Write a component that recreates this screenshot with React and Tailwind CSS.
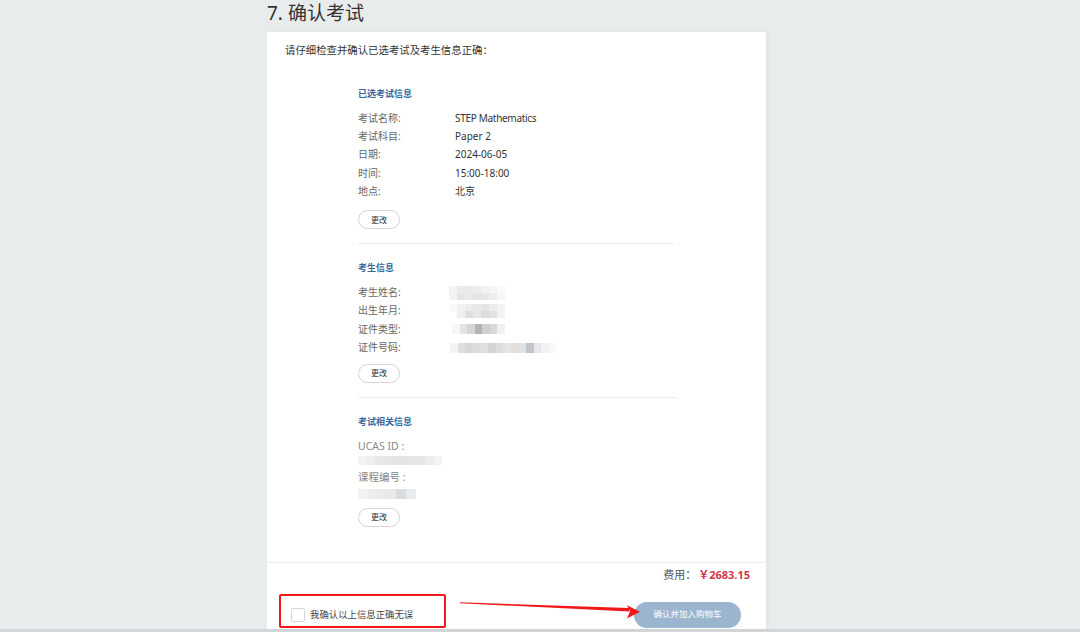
import React from "react";

const FONT = { fontFamily: '"Noto Sans", "Noto Sans CJK SC", sans-serif' };

function Pixels({ rows, cell }) {
  return (
    <div className="flex flex-col">
      {rows.map((r, i) => (
        <div key={i} className="flex">
          {r.map((c, j) => (
            <div key={j} style={{ backgroundColor: c, width: cell[0], height: cell[1] }} />
          ))}
        </div>
      ))}
    </div>
  );
}

function Row({ label, children }) {
  return (
    <div className="flex h-[18.3px] items-center text-[10px]">
      <div className="w-[97px] text-[#666]">{label}</div>
      <div className="text-[#333]">{children}</div>
    </div>
  );
}

function EditBtn({ className = "" }) {
  return (
    <button className={"flex h-[19px] w-[42px] items-center justify-center rounded-full border border-[#d4d4d4] bg-white text-[8px] text-[#333] " + className}>
      更改
    </button>
  );
}

function Heading({ children, className = "" }) {
  return (
    <div className={"h-[14px] text-[9px] font-bold leading-[14px] text-[#3b6699] " + className}>{children}</div>
  );
}

export default function App() {
  return (
    <div className="relative h-[632px] w-[1080px] overflow-hidden bg-[#e9eced]" style={FONT}>
      <div className="flex h-[629px] flex-col pl-[267px]">
        <div className="h-[32px] text-[19px] leading-[27px] text-[#333]">7. 确认考试</div>
        <div className="flex w-[499px] flex-1 flex-col bg-white shadow-[2px_0_4px_rgba(0,0,0,0.04)]">
          <div className="pl-[18px] pt-[11px] text-[10.4px] leading-[14px] text-[#333]">
            请仔细检查并确认已选考试及考生信息正确：
          </div>

          <div className="ml-[91px] w-[316px]">
            <Heading className="mt-[30px]">已选考试信息</Heading>
            <div className="mt-[8px]">
              <Row label="考试名称:"><span className="tracking-[-0.3px]">STEP Mathematics</span></Row>
              <Row label="考试科目:">Paper 2</Row>
              <Row label="日期:">2024-06-05</Row>
              <Row label="时间:">15:00-18:00</Row>
              <Row label="地点:">北京</Row>
            </div>
            <EditBtn className="mt-[10px]" />
            <div className="mt-[14px] border-t border-[#eeeeee]" />

            <Heading className="mt-[17px]">考生信息</Heading>
            <div className="mt-[8px]">
              <Row label="考生姓名:">
                <div className="-ml-[6px]">
                  <Pixels
                    cell={[8, 7]}
                    rows={[
                      ["#f4f4f4", "#ececec", "#e9e9e9", "#ededed", "#f2f2f2", "#f6f6f6", "#fbfbfb"],
                      ["#f3f3f3", "#e6e6e6", "#ebebeb", "#e4e4e4", "#e8e8e8", "#eeeeee", "#f7f7f7"],
                    ]}
                  />
                </div>
              </Row>
              <Row label="出生年月:">
                <div className="-ml-[6px]">
                  <Pixels
                    cell={[8, 7]}
                    rows={[
                      ["#fafafa", "#f2f2f2", "#ececec", "#e7e7e7", "#e4e4e4", "#ebebeb", "#f4f4f4"],
                      ["#ffffff", "#f0f0f0", "#dedede", "#e6e6e6", "#dcdcdc", "#e2e2e2", "#f2f2f2"],
                    ]}
                  />
                </div>
              </Row>
              <Row label="证件类型:">
                <div className="-ml-[3px]">
                  <Pixels
                    cell={[7.5, 10]}
                    rows={[["#f6f6f6", "#e4e4e4", "#d6d6d6", "#b3b3b3", "#cfcfcf", "#d9d9d9", "#f0f0f0"]]}
                  />
                </div>
              </Row>
              <Row label="证件号码:">
                <div className="-ml-[5px]">
                  <Pixels
                    cell={[7.6, 10]}
                    rows={[
                      ["#f4f4f4", "#dedede", "#d8d8d8", "#dcdcdc", "#e0e0e0", "#d4d4d4", "#dcdee0", "#e2e4e6", "#e3e0dc", "#dfe2e6", "#c6c4c8", "#e8e8ea", "#f2f2f4", "#fafafa"],
                    ]}
                  />
                </div>
              </Row>
            </div>
            <EditBtn className="mt-[7px]" />
            <div className="mt-[14px] w-[320px] border-t border-[#eeeeee]" />

            <Heading className="mt-[17px]">考试相关信息</Heading>
            <div className="mt-[9px] flex h-[18px] items-center text-[10.5px] text-[#888]">UCAS ID :</div>
            <div>
              <Pixels
                cell={[8.4, 9]}
                rows={[["#f3f3f3", "#eeeeee", "#e8e8e8", "#e6e6e6", "#e4e4e4", "#e4e4e4", "#e6e6e6", "#e6e6e6", "#ececec", "#f3f3f3"]]}
              />
            </div>
            <div className="mt-[4px] flex h-[18px] items-center text-[10.5px] text-[#888]">课程编号 :</div>
            <div className="mt-[2px]">
              <Pixels
                cell={[9.6, 10]}
                rows={[["#f2f2f2", "#ededed", "#eaeaea", "#e9e9e9", "#dcdcdc", "#e8ecef"]]}
              />
            </div>
            <EditBtn className="mt-[9px]" />
          </div>

          <div className="mt-[35px] border-t border-[#eeeeee]" />
          <div className="flex h-[26px] items-center justify-end pr-[16px] text-[11px]">
            <span className="text-[#555]">费用：</span>
            <span className="ml-[2px] font-bold text-[#d0374b]">￥2683.15</span>
          </div>

          <div className="mt-[13px] flex items-center justify-between pl-[24px] pr-[25px]">
            <div className="flex items-center">
              <div className="h-[14px] w-[14px] rounded-[2px] border border-[#d6d6d6] bg-white" />
              <span className="ml-[5px] text-[9.4px] text-[#444]">我确认以上信息正确无误</span>
            </div>
            <button className="flex h-[26px] w-[107px] items-center justify-center rounded-full bg-[#9cb5cf] text-[8.5px] text-white">
              确认并加入购物车
            </button>
          </div>
        </div>
      </div>
      <div className="h-[3px] bg-[#d4d7d9]" />

      {/* annotation overlay */}
      <div className="pointer-events-none absolute left-[279px] top-[594px] h-[34px] w-[167px] rounded-[2px] border-2 border-[#f01818]" />
      <svg className="pointer-events-none absolute left-0 top-0" width="1080" height="632" viewBox="0 0 1080 632">
        <polygon points="460,602.3 629,608 629,611.5 460,603.2" fill="#f01818" />
        <polygon points="627,605.3 640,611.8 627,618.5 630,611.5" fill="#f01818" />
      </svg>
    </div>
  );
}
